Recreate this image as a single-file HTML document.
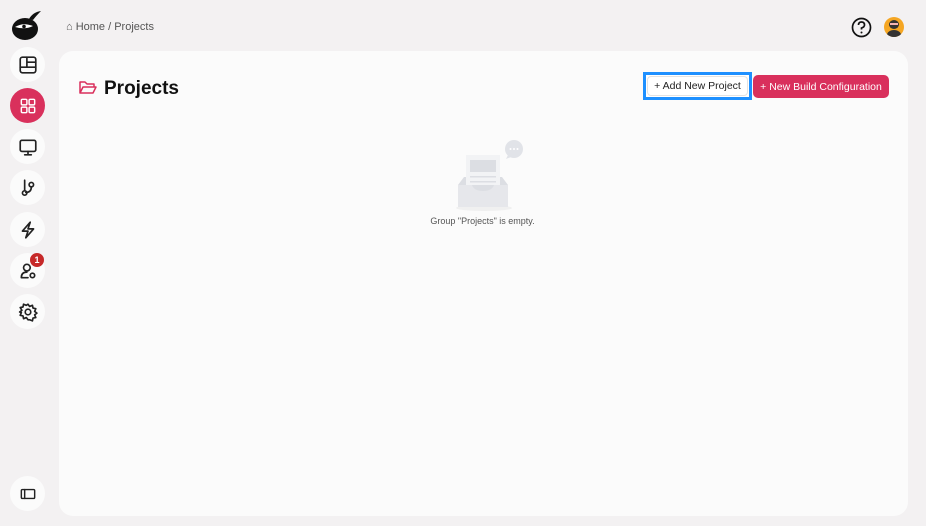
<!DOCTYPE html>
<html><head><meta charset="utf-8"><style>
*{margin:0;padding:0;box-sizing:border-box}
body{width:926px;height:526px;background:#f3f1f2;font-family:"Liberation Sans",sans-serif;position:relative;overflow:hidden}
.c{position:absolute;left:10px;width:35px;height:35px;border-radius:50%;background:#fbfbfb;display:flex;align-items:center;justify-content:center}
.c svg{width:20px;height:20px;fill:none;stroke:#222;stroke-width:1.5;stroke-linecap:round;stroke-linejoin:round}
.panel{position:absolute;left:59px;top:51px;width:849px;height:465px;background:#fbfbfb;border-radius:14px}
.bc{position:absolute;left:66px;top:21px;font-size:11px;color:#555}
h1{position:absolute;left:104px;top:78px;font-size:19px;font-weight:bold;color:#111}
.b1{position:absolute;left:643px;top:72px;width:109px;height:28px;border:3px solid #1e90ff;background:#fff;font-size:10.5px;color:#222;display:flex;align-items:center;justify-content:center}
.b1 span{position:absolute;inset:1px;border:1px solid #e2e2e2;border-radius:4px}
.b2{position:absolute;left:753px;top:75px;width:136px;height:23px;background:#d9305c;border-radius:5px;color:#fff;font-size:10.5px;display:flex;align-items:center;justify-content:center}
</style></head><body>
<svg style="position:absolute;left:11px;top:8px" width="32" height="34" viewBox="0 0 32 34"><ellipse cx="14" cy="21" rx="13" ry="11" fill="#111"/><path d="M18 11 Q22 4 30 3 Q25 8 22 12Z" fill="#111"/><path d="M4 19 Q12 14 22 18 Q14 22 4 19Z" fill="#fff"/><circle cx="13" cy="18.5" r="1.8" fill="#111"/></svg>
<div class="c" style="top:47px"><svg viewBox="0 0 18 18"><rect x="2" y="2" width="14" height="14" rx="2"/><path d="M2 11h14M8 11V2M8 6.5h8"/></svg></div>
<div class="c" style="top:88px;background:#d9305c"><svg viewBox="0 0 18 18" style="stroke:#fff;stroke-width:1.3"><rect x="3" y="3" width="5" height="5" rx="1"/><rect x="10" y="3" width="5" height="5" rx="1"/><rect x="3" y="10" width="5" height="5" rx="1"/><rect x="10" y="10" width="5" height="5" rx="1"/></svg></div>
<div class="c" style="top:129px"><svg viewBox="0 0 18 18"><rect x="2" y="3" width="14" height="10" rx="1.5"/><path d="M9 13v3M6 16h6"/></svg></div>
<div class="c" style="top:170px"><svg viewBox="0 0 18 18"><path d="M6 2v9"/><circle cx="6" cy="13.5" r="2"/><circle cx="12" cy="6" r="2"/><path d="M12 8q0 5-5 5"/></svg></div>
<div class="c" style="top:212px"><svg viewBox="0 0 18 18"><path d="M11 2 4 10h5l-2 6 7-8H9z"/></svg></div>
<div class="c" style="top:253px"><svg viewBox="0 0 18 18"><circle cx="8" cy="6" r="3"/><path d="M3 15q0-5 5-5M3 15h6"/><circle cx="13" cy="13" r="2"/></svg></div>
<div style="position:absolute;left:30px;top:253px;width:14px;height:14px;border-radius:50%;background:#c62828;color:#fff;font-size:9px;font-weight:bold;display:flex;align-items:center;justify-content:center">1</div>
<div class="c" style="top:294px"><svg viewBox="0 0 18 18"><circle cx="9" cy="9" r="2.5"/><path d="M9 2l1.5 2 2.5-1 .5 2.5 2.5.5-1 2.5 2 1.5-2 1.5 1 2.5-2.5.5-.5 2.5-2.5-1L9 16l-1.5-2-2.5 1-.5-2.5L2 12l1-2.5L1.5 9l2-1.5L2 5l2.5-.5L5 2l2.5 1z"/></svg></div>
<div class="c" style="top:476px"><svg viewBox="0 0 18 18" style="stroke-width:1.3"><rect x="3" y="5" width="12" height="8" rx="1"/><path d="M6 5v8"/></svg></div>
<div class="bc">⌂ Home / Projects</div>
<svg style="position:absolute;left:851px;top:17px" width="21" height="21" viewBox="0 0 21 21"><circle cx="10.5" cy="10.5" r="9" fill="none" stroke="#111" stroke-width="1.7"/><path d="M7.5 8q0-3 3-3t3 3q0 2-3 3v1.5" fill="none" stroke="#111" stroke-width="1.7"/><circle cx="10.5" cy="15.5" r="1" fill="#111"/></svg>
<div style="position:absolute;left:884px;top:17px;width:20px;height:20px;border-radius:50%;background:#f5a623;overflow:hidden"><div style="position:absolute;left:5px;top:3px;width:10px;height:9px;border-radius:50%;background:#333"></div><div style="position:absolute;left:3px;top:13px;width:14px;height:10px;border-radius:50%;background:#333"></div><div style="position:absolute;left:6px;top:6px;width:8px;height:2px;background:#f4b4b4"></div></div>
<div class="panel"></div>
<svg style="position:absolute;left:79px;top:80px" width="18" height="15" viewBox="0 0 18 15"><path d="M1 13V2h5l2 2h7v3M1 13l3-6h13l-3 6z" fill="none" stroke="#d9305c" stroke-width="1.5" stroke-linejoin="round"/></svg>
<h1>Projects</h1>
<div class="b1"><span></span><b style="font-weight:normal;position:relative">+ Add New Project</b></div>
<div class="b2">+ New Build Configuration</div>
<svg style="position:absolute;left:450px;top:140px" width="80" height="72" viewBox="0 0 80 72"><ellipse cx="34" cy="68" rx="28" ry="3" fill="#f0f0f0"/><circle cx="64" cy="9" r="9" fill="#e1e3e8"/><path d="M58 15l-2 4 5-2z" fill="#e1e3e8"/><circle cx="60.5" cy="9" r="1" fill="#fff"/><circle cx="64" cy="9" r="1" fill="#fff"/><circle cx="67.5" cy="9" r="1" fill="#fff"/><rect x="16" y="15" width="34" height="40" fill="#f2f3f5"/><rect x="20" y="20" width="26" height="12" fill="#dcdee3"/><rect x="20" y="36" width="26" height="1.5" fill="#dcdee3"/><rect x="20" y="41" width="26" height="1.5" fill="#dcdee3"/><path d="M8 45l6-8h2v8h34v-8h2l6 8v22H8z" fill="#dcdee3"/><path d="M8 45h14q2 6 11 6t11-6h14v22H8z" fill="#e6e7eb"/></svg>
<div style="position:absolute;left:0;width:926px;top:216px;text-align:center;font-size:9px;color:#555;padding-left:39px">Group "Projects" is empty.</div>
</body></html>
